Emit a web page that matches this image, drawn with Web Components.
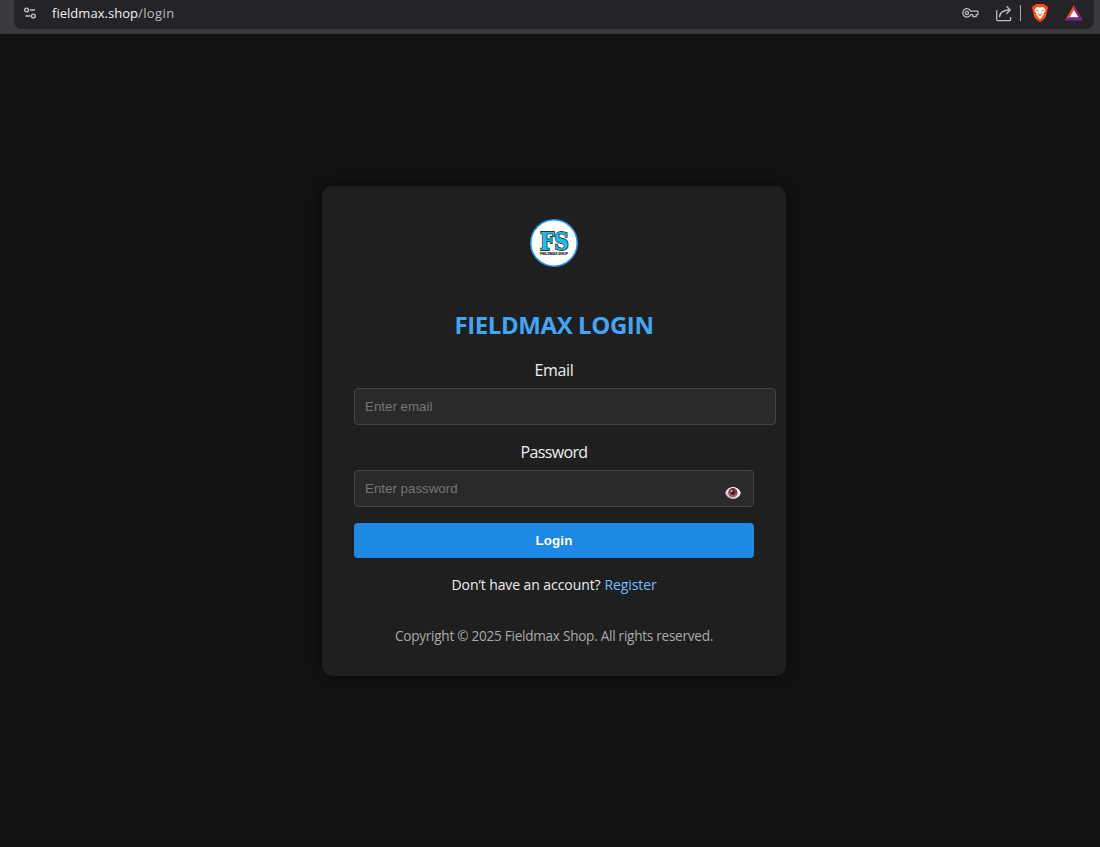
<!DOCTYPE html>
<html lang="en"><head><meta charset="utf-8"><title>Fieldmax Login</title>
<style>
html,body{margin:0;height:100%}
body{background:#121212;color:#eee;font-family:"Open Sans","Noto Sans",sans-serif;overflow:hidden}
</style></head><body>
<login-page></login-page>
<script>
const define=(name,html,setup)=>customElements.define(name,class extends HTMLElement{
  connectedCallback(){
    if(this.shadowRoot)return;
    const t=document.createElement('template');t.innerHTML=html;
    this.attachShadow({mode:'open'}).append(t.content.cloneNode(true));
    if(setup)setup(this,this.shadowRoot);
  }
});

// One line of text whose tracking is set so that it fills the given width.
define('fit-text',`<style>:host{display:inline-block;white-space:pre}</style><span><slot></slot></span>`,(el,root)=>{
  const w=+el.getAttribute('width');
  const n=el.textContent.length;
  const span=root.querySelector('span');
  span.style.letterSpacing=((w-span.getBoundingClientRect().width)/n)+'px';
});

define('address-bar',`<style>
:host{display:block;box-sizing:border-box;height:34px;background:#3b3a3f;border-bottom:1px solid #343338;padding:0 6px 0 14px}
.pill{height:29px;box-sizing:border-box;background:#242328;border-radius:0 0 8px 8px;display:flex;align-items:center;padding:0 11px 3px 9px}
svg{display:block;flex:none}
.url{font-size:13px;line-height:20px;margin-left:15px;color:#f0f0f2;flex:1;display:flex}
.path{color:#bbbbc0}
.sep{width:1px;height:16px;background:#aaa9ae;margin:0 11px 0 7px}
</style>
<div class="pill">
<svg width="14" height="14" viewBox="0 0 14 14" fill="none" stroke="#c6c5ca" stroke-width="1.4"><circle cx="3.6" cy="4" r="1.9"/><path d="M7 4h5M2.5 10h5"/><circle cx="10.4" cy="10" r="1.9"/></svg>
<div class="url"><fit-text width="86">fieldmax.shop</fit-text><fit-text class="path" width="36.5">/login</fit-text></div>
<svg width="17" height="12" viewBox="0 0 17 12" fill="none" stroke="#bdbcc1" stroke-width="1.3"><path d="M8.8 4.2A4.2 4.2 0 1 0 8.8 7.6H10.8V9.6H14.2V7.6H15.9V4.2Z" stroke-linejoin="round"/><circle cx="4.9" cy="5.9" r="1.6"/></svg>
<svg style="margin-left:16px" width="18" height="17" viewBox="0 0 18 17" fill="none" stroke="#bdbcc1" stroke-width="1.3"><path d="M1.7 5.2V14.5Q1.7 15.7 2.9 15.7H14.4Q15.6 15.7 15.6 14.5V12M4.5 12.3C4.6 7.8 8 5 14.8 5M11.5 1.3 15.2 5 11.5 8.7"/></svg>
<i class="sep"></i>
<svg width="16" height="18" viewBox="0 0 16 18"><path fill="#fb4d12" d="M4 0H12L13.6 1.7 15 1.5 16 4 15.4 5.8 14 12.3Q13.6 14 12 15.2L8 18 4 15.2Q2.4 14 2 12.3L.6 5.8 0 4 1 1.5 2.4 1.7Z"/><path fill="#fff" d="M4.8 3 8 3.6 11.2 3 13.6 5.8 12.6 8 11.5 9.7 11.8 11.2 10.2 11.7 10.4 13 8 15 5.6 13 5.8 11.7 4.2 11.2 4.5 9.7 3.4 8 2.4 5.8Z"/><path fill="none" stroke="#fb4d12" stroke-width=".9" d="M4.4 6.3 6.8 7.2M11.6 6.3 9.2 7.2M5.8 9.6 7.5 10.8H8.5L10.2 9.6M8 10.8V12"/></svg>
<svg style="margin-left:17px" width="18" height="16" viewBox="0 0 18 16"><path fill="#ff4724" d="M9 0V5L4.4 12.7 0 15.5Z"/><path fill="#9e1f63" d="M9 0 18 15.5 13.6 12.7 9 5Z"/><path fill="#662d91" d="M0 15.5 4.4 12.2H13.6L18 15.5Z"/><path fill="#fff" d="M9 4.8 13.4 12.2H4.6Z"/></svg>
</div>`);

define('shop-logo',`<style>:host{display:block;width:48px;height:48px}svg{display:block}</style>
<svg width="48" height="48" viewBox="0 0 48 48"><circle cx="24" cy="24" r="23.2" fill="#fff" stroke="#2795ee" stroke-width="1.5"/>
<text x="10" y="30.6" font-family="DejaVu Serif,serif" font-weight="700" font-size="25" textLength="29" lengthAdjust="spacingAndGlyphs" fill="#12bff5" stroke="#3c3020" stroke-width="1.8" paint-order="stroke">FS</text>
<text x="10" y="36" font-family="Liberation Sans,sans-serif" font-weight="700" font-size="4" textLength="28" lengthAdjust="spacingAndGlyphs" fill="#222" stroke="#333" stroke-width=".2">FIELDMAX SHOP</text></svg>`);

define('form-field',`<style>
:host{display:block;height:82px}
label{display:flex;justify-content:center;font-size:16px;line-height:22px;height:29px;color:#eee}
.box{position:relative;width:var(--box-width,400px)}
input{display:block;box-sizing:border-box;width:100%;height:37px;padding:10px;border:1px solid #444;border-radius:4px;background:#2a2a2a;color:#eee;font:13.333px "Liberation Sans",Arial,sans-serif;outline:none}
input::placeholder{color:#757575;opacity:1}
slot{display:block;position:absolute;right:13px;top:16px}
</style><label for="i"></label><div class="box"><input id="i"><slot></slot></div>`,(el,root)=>{
  root.querySelector('label').innerHTML='<fit-text width="'+el.getAttribute('label-width')+'">'+el.getAttribute('label')+'</fit-text>';
  const i=root.querySelector('input');
  i.type=el.getAttribute('type');i.placeholder=el.getAttribute('placeholder');
});

define('reveal-eye',`<style>:host{display:block;cursor:pointer}svg{display:block}</style>
<svg width="16" height="14" viewBox="0 0 17 14"><defs><linearGradient id="w" x1="0" y1="1" x2="1" y2="0"><stop offset="0" stop-color="#a58bc0"/><stop offset=".4" stop-color="#e8e0ee"/><stop offset="1" stop-color="#fff"/></linearGradient><linearGradient id="r" x1="0" y1="0" x2="0" y2="1"><stop offset="0" stop-color="#64283f"/><stop offset="1" stop-color="#b66b5f"/></linearGradient></defs>
<path d="M.3 7C1.2 3 5 .7 8.5.7S15.8 3 16.7 7C15.8 11 12 13.3 8.5 13.3S1.2 11 .3 7Z" fill="url(#w)"/><circle cx="8.4" cy="6.7" r="5" fill="url(#r)"/><circle cx="8.4" cy="6.7" r="2.3" fill="#371f2c"/><circle cx="7" cy="5" r="1" fill="#eee3e8"/></svg>`);

define('login-card',`<style>
:host{box-sizing:border-box;width:464px;height:490px;padding:33px 32px 0;border-radius:10px;background:#1f1f1f;box-shadow:0 0 15px rgba(0,0,0,.5);display:flex;flex-direction:column;align-items:center}
h2{margin:41px 0 18px;font-size:24px;line-height:33px;font-weight:700;color:#42a5f5}
form{width:400px;margin:0}
.email{--box-width:422px}
button{display:block;width:400px;height:35px;padding:0;border:0;border-radius:4px;background:#1e88e5;color:#fff;font:700 13.333px "Liberation Sans",Arial,sans-serif}
p{margin:17px 0 0;font-size:14px;line-height:19px;display:flex;gap:4px}
a{color:#76bdf8;text-decoration:none}
footer{margin-top:32px;font-size:13.6px;line-height:19px;color:#aaa}
</style>
<shop-logo></shop-logo>
<h2><fit-text width="199">FIELDMAX LOGIN</fit-text></h2>
<form>
<form-field class="email" label="Email" label-width="39" type="email" placeholder="Enter email"></form-field>
<form-field label="Password" label-width="67" type="password" placeholder="Enter password"><reveal-eye></reveal-eye></form-field>
<button type="button"><fit-text width="37">Login</fit-text></button>
</form>
<p><fit-text width="149">Don’t have an account?</fit-text><a href="#"><fit-text width="52">Register</fit-text></a></p>
<footer><fit-text width="318">Copyright © 2025 Fieldmax Shop. All rights reserved.</fit-text></footer>`);

define('login-page',`<style>
:host{display:flex;flex-direction:column;height:100vh}
main{flex:1;display:flex;justify-content:center;align-items:flex-start;padding:152px 0 0 8px}
</style><address-bar></address-bar><main><login-card></login-card></main>`);
</script></body></html>
